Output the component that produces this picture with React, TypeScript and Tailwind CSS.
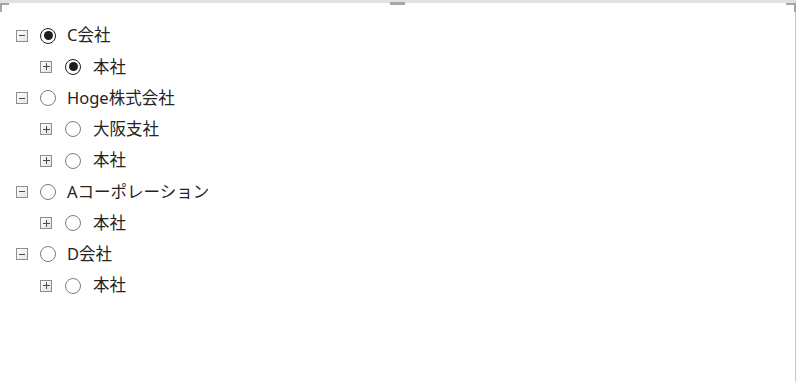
import React from 'react';

type Node = { label: string; checked?: boolean; children?: Node[] };

const tree: Node[] = [
  { label: 'C会社', checked: true, children: [{ label: '本社', checked: true }] },
  { label: 'Hoge株式会社', children: [{ label: '大阪支社' }, { label: '本社' }] },
  { label: 'Aコーポレーション', children: [{ label: '本社' }] },
  { label: 'D会社', children: [{ label: '本社' }] },
];

function Toggle({ open }: { open: boolean }) {
  return (
    <span className="flex items-center justify-center w-[12px] h-[12px] border border-[#8e8e8e] bg-gradient-to-br from-white to-[#e4e4e4] shrink-0">
      {open ? (
        <span className="block w-[6px] h-[1px] bg-[#4a4a4a]" />
      ) : (
        <svg width="7" height="7" viewBox="0 0 7 7" className="block">
          <path d="M0 3.5H7M3.5 0V7" stroke="#4a4a4a" strokeWidth="1" />
        </svg>
      )}
    </span>
  );
}

function Radio({ checked }: { checked?: boolean }) {
  return checked ? (
    <span className="flex items-center justify-center w-[16px] h-[16px] rounded-full border-[1.5px] border-[#1e1e1e] bg-white shrink-0">
      <span className="block w-[9px] h-[9px] rounded-full bg-[#1e1e1e]" />
    </span>
  ) : (
    <span className="block w-[16px] h-[16px] rounded-full border border-[#7d7d7d] bg-white shrink-0" />
  );
}

function Row({ node, level }: { node: Node; level: number }) {
  return (
    <div className={`flex items-center h-[31.25px] ${level === 0 ? 'pl-[16px]' : 'pl-[40px]'}`}>
      <Toggle open={level === 0} />
      <div className={`flex items-center ${level === 0 ? 'ml-[12px] gap-[11px]' : 'ml-[13px] gap-[12px]'}`}>
        <Radio checked={node.checked} />
        <span className="text-[16.5px] text-[#252423] leading-none">{node.label}</span>
      </div>
    </div>
  );
}

export default function App() {
  return (
    <div
      className="relative w-[798px] h-[382px] bg-white overflow-hidden"
      style={{ fontFamily: '"Noto Sans", "Noto Sans CJK JP", sans-serif' }}
    >
      <div className="w-[796px] h-full border-t-[3px] border-t-[#e1e1e1] border-r border-r-[#c6c6c6] pt-[17px]">
        {tree.map((n, i) => (
          <div key={i}>
            <Row node={n} level={0} />
            {n.children?.map((c, j) => <Row key={j} node={c} level={1} />)}
          </div>
        ))}
      </div>

      {/* selection handles */}
      <div className="absolute left-0 top-[3px] w-[9px] h-[9px] border-l-2 border-t-2 border-[#a6a6a6]" />
      <div className="absolute left-[786px] top-[3px] w-[10px] h-[9px] border-r-2 border-t-2 border-[#a6a6a6]" />
      <div className="absolute left-[390px] top-[2px] w-[15px] h-[3px] bg-[#a6a6a6]" />
    </div>
  );
}
